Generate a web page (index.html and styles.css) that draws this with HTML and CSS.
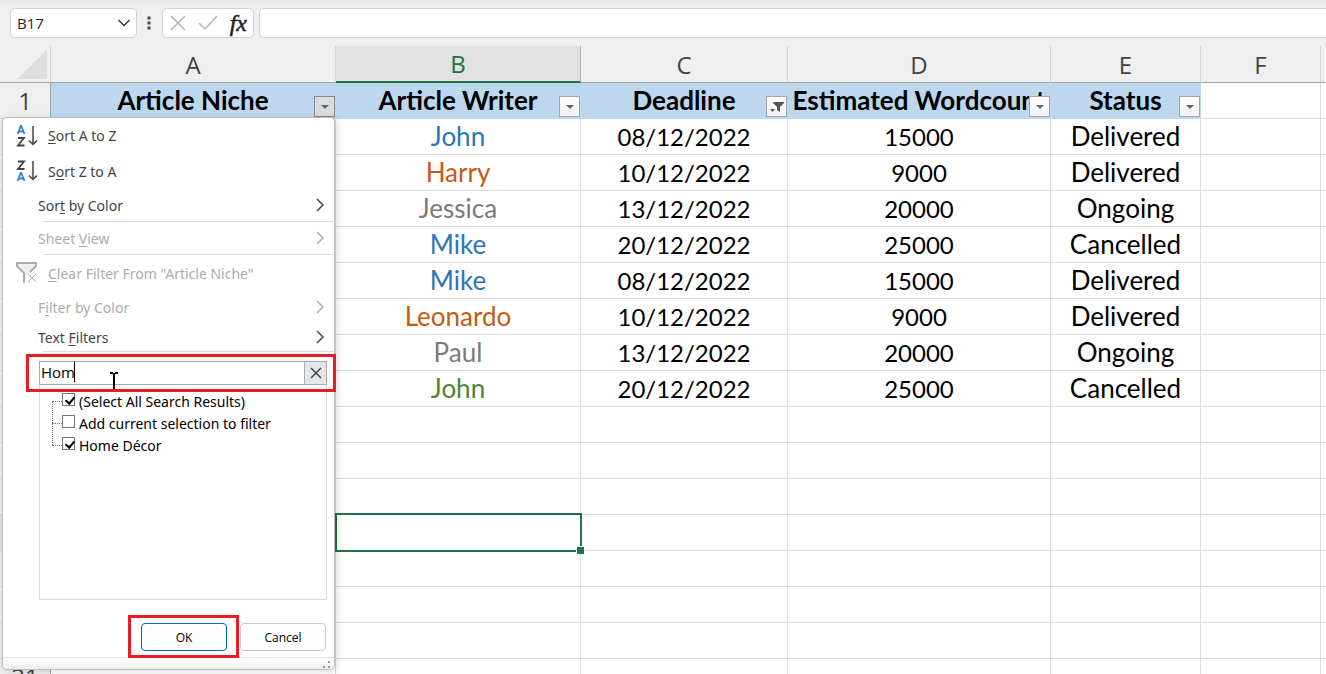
FILE: index.html
```html
<!DOCTYPE html>
<html lang="en">
<head>
    <meta charset="UTF-8">
    <meta name="viewport" content="width=device-width, initial-scale=1.0">
    <title>Article Tracker</title>
    <link rel="stylesheet" href="styles.css">
</head>
<body>
    <header class="formula-bar">
        <div class="name-box">
            <input type="text" class="name-input" value="B17" aria-label="Name box">
            <button type="button" class="icon-btn" aria-label="Show names">
                <svg width="14" height="8" viewBox="0 0 14 8"><path d="M1.5 1l5.500 5.500L12.500 1"/></svg>
            </button>
        </div>
        <svg class="dots" width="4" height="14" viewBox="0 0 4 14"><path d="M0.500 0.500h3v3h-3zM0.500 5.500h3v3h-3zM0.500 10.500h3v3h-3z"/></svg>
        <div class="formula-tools">
            <button type="button" class="icon-btn muted" aria-label="Cancel entry">
                <svg width="16" height="16" viewBox="0 0 16 16"><path d="M1 1l14 14M15 1L1 15"/></svg>
            </button>
            <button type="button" class="icon-btn muted" aria-label="Enter">
                <svg width="20" height="16" viewBox="0 0 20 16"><path d="M1 8l6 6L19 1"/></svg>
            </button>
            <button type="button" class="fx-btn" aria-label="Insert function"><i>fx</i></button>
        </div>
        <input type="text" class="formula-input" aria-label="Formula">
    </header>

    <main class="sheet">
        <table>
            <colgroup>
                <col class="col-head"><col class="col-a"><col class="col-b"><col class="col-c"><col class="col-d"><col class="col-e"><col class="col-f"><col>
            </colgroup>
            <thead>
                <tr>
                    <th class="corner"></th>
                    <th>A</th>
                    <th class="active">B</th>
                    <th>C</th>
                    <th>D</th>
                    <th>E</th>
                    <th>F</th>
                    <th></th>
                </tr>
            </thead>
            <tbody>
                <tr class="titles">
                    <th>1</th>
                    <td>Article Niche<button type="button" class="filter-btn open" aria-label="Filter Article Niche"><span class="arrow"></span></button></td>
                    <td>Article Writer<button type="button" class="filter-btn" aria-label="Filter Article Writer"><span class="arrow"></span></button></td>
                    <td>Deadline<button type="button" class="filter-btn" aria-label="Filter Deadline"><svg width="14" height="12" viewBox="0 0 14 12"><path d="M3 1h11v1L10 6v5L7 9V6L3 2zM0 8h5L2.500 11z"/></svg></button></td>
                    <td>Estimated Wordcount<button type="button" class="filter-btn" aria-label="Filter Estimated Wordcount"><span class="arrow"></span></button></td>
                    <td>Status<button type="button" class="filter-btn" aria-label="Filter Status"><span class="arrow"></span></button></td>
                    <td></td>
                    <td></td>
                </tr>
                <tr><th></th><td></td><td class="blue">John</td><td class="num">08/12/2022</td><td class="num">15000</td><td>Delivered</td><td></td><td></td></tr>
                <tr><th></th><td></td><td class="orange">Harry</td><td class="num">10/12/2022</td><td class="num">9000</td><td>Delivered</td><td></td><td></td></tr>
                <tr><th></th><td></td><td class="gray">Jessica</td><td class="num">13/12/2022</td><td class="num">20000</td><td>Ongoing</td><td></td><td></td></tr>
                <tr><th></th><td></td><td class="blue">Mike</td><td class="num">20/12/2022</td><td class="num">25000</td><td>Cancelled</td><td></td><td></td></tr>
                <tr><th></th><td></td><td class="blue">Mike</td><td class="num">08/12/2022</td><td class="num">15000</td><td>Delivered</td><td></td><td></td></tr>
                <tr><th></th><td></td><td class="orange">Leonardo</td><td class="num">10/12/2022</td><td class="num">9000</td><td>Delivered</td><td></td><td></td></tr>
                <tr><th></th><td></td><td class="gray">Paul</td><td class="num">13/12/2022</td><td class="num">20000</td><td>Ongoing</td><td></td><td></td></tr>
                <tr><th></th><td></td><td class="green">John</td><td class="num">20/12/2022</td><td class="num">25000</td><td>Cancelled</td><td></td><td></td></tr>
                <tr><th></th><td></td><td></td><td></td><td></td><td></td><td></td><td></td></tr>
                <tr><th></th><td></td><td></td><td></td><td></td><td></td><td></td><td></td></tr>
                <tr><th></th><td></td><td></td><td></td><td></td><td></td><td></td><td></td></tr>
                <tr><th class="active"></th><td></td><td class="selected"></td><td></td><td></td><td></td><td></td><td></td></tr>
                <tr><th></th><td></td><td></td><td></td><td></td><td></td><td></td><td></td></tr>
                <tr><th></th><td></td><td></td><td></td><td></td><td></td><td></td><td></td></tr>
                <tr><th></th><td></td><td></td><td></td><td></td><td></td><td></td><td></td></tr>
                <tr><th>21</th><td></td><td></td><td></td><td></td><td></td><td></td><td></td></tr>
            </tbody>
        </table>

        <form class="filter-menu">
            <button type="button" class="item tall">
                <svg class="sort" width="22" height="22" viewBox="0 0 22 22"><path class="letter-a" d="M1.500 9L4.800 1h.4l3.300 8M2.600 6.500h4.800"/><path d="M2 13h6L2 20.500h6.500"/><path class="stem" d="M17 1v18M13 15.500l4 4 4-4"/></svg>
                <span><u>S</u>ort A to Z</span>
            </button>
            <button type="button" class="item tall">
                <svg class="sort" width="22" height="22" viewBox="0 0 22 22"><path d="M2 1.500h6L2 9h6.500"/><path class="stem" d="M17 1v18M13 15.500l4 4 4-4"/><path class="letter-a" d="M1.500 21L4.800 13h.4l3.300 8M2.600 18.500h4.800"/></svg>
                <span>S<u>o</u>rt Z to A</span>
            </button>
            <button type="button" class="item sub"><span>Sor<u>t</u> by Color</span><svg class="chevron" width="8" height="14" viewBox="0 0 8 14"><path d="M1 1l6 6-6 6"/></svg></button>
            <hr>
            <button type="button" class="item sub" disabled><span>Sheet <u>V</u>iew</span><svg class="chevron" width="8" height="14" viewBox="0 0 8 14"><path d="M1 1l6 6-6 6"/></svg></button>
            <hr>
            <button type="button" class="item tall" disabled>
                <svg class="funnel" width="22" height="22" viewBox="0 0 22 22"><path class="cup" d="M14 10l6-6V1H1v3l7 7v10"/><path d="M12 12l8 8M20 12l-8 8"/></svg>
                <span><u>C</u>lear Filter From "Article Niche"</span>
            </button>
            <button type="button" class="item sub" disabled><span>F<u>i</u>lter by Color</span><svg class="chevron" width="8" height="14" viewBox="0 0 8 14"><path d="M1 1l6 6-6 6"/></svg></button>
            <button type="button" class="item sub short"><span>Text <u>F</u>ilters</span><svg class="chevron" width="8" height="14" viewBox="0 0 8 14"><path d="M1 1l6 6-6 6"/></svg></button>
            <hr>
            <div class="search">
                <input type="text" value="Hom" aria-label="Search">
                <button type="button" aria-label="Clear search"><svg width="12" height="12" viewBox="0 0 12 12"><path d="M1 1l10 10M11 1L1 11"/></svg></button>
                <span class="caret"></span>
                <svg class="pointer" width="8" height="17" viewBox="0 0 8 17"><path d="M0 1h3M5 1h3M4 1v16"/></svg>
                <span class="marker"></span>
            </div>
            <div class="results">
                <label><input type="checkbox" checked>(Select All Search Results)</label>
                <label><input type="checkbox">Add current selection to filter</label>
                <label><input type="checkbox" checked>Home Décor</label>
            </div>
            <div class="actions">
                <div class="ok-wrap"><button type="button" class="ok">OK</button><span class="marker"></span></div>
                <button type="button">Cancel</button>
            </div>
            <div class="grip"><svg width="8" height="8" viewBox="0 0 8 8"><path d="M5 0h2v2h-2zM0 5h2v2h-2zM5 5h2v2h-2z"/></svg></div>
        </form>
    </main>
</body>
</html>
```
FILE: styles.css
```css
* {
    margin: 0;
    padding: 0;
    box-sizing: border-box;
}

body {
    font-family: "Noto Sans", sans-serif;
    background: #efefef;
    color: #000;
    height: 100vh;
    display: flex;
    flex-direction: column;
    overflow: hidden;
}

button {
    font: inherit;
    color: inherit;
    background: none;
    border: none;
}

svg {
    display: block;
    fill: none;
    stroke: currentColor;
}

/* formula bar */
.formula-bar {
    display: flex;
    align-items: center;
    padding: 8px 0 8px 10px;
    background: linear-gradient(#e2e2e2, #efefef 6px);
}

.name-box,
.formula-tools,
.formula-input {
    height: 30px;
    background: #fff;
    border: 1px solid #d0d0d0;
    border-radius: 5px;
}

.name-box {
    width: 127px;
    display: flex;
    align-items: center;
    padding: 0 5px 0 6px;
}

.name-input {
    flex: 1;
    min-width: 0;
    border: none;
    outline: none;
    font: 15px "Open Sans", sans-serif;
    color: #262626;
}

.icon-btn {
    color: #333;
    stroke-width: 1.5;
}

.icon-btn.muted {
    color: #b3b3b3;
}

.dots {
    margin: 0 11px 0 10px;
    fill: #444;
    stroke: none;
}

.formula-tools {
    width: 92px;
    margin-right: 5px;
    padding: 0 6px 0 7px;
    display: flex;
    align-items: center;
    justify-content: space-between;
}

.fx-btn {
    font: 24px/26px "Liberation Serif", serif;
    color: #222;
    -webkit-text-stroke: 0.5px #222;
}

.formula-input {
    flex: 1;
    min-width: 0;
    border-right: none;
    border-radius: 5px 0 0 5px;
    padding: 0 8px;
}

/* grid */
.sheet {
    flex: 1;
    position: relative;
}

table {
    width: 100%;
    table-layout: fixed;
    border-collapse: separate;
    border-spacing: 0;
    font: 26px/33px Lato, sans-serif;
    text-align: center;
}

.col-head { width: 51px; }
.col-a { width: 285px; }
.col-b { width: 245px; }
.col-c { width: 207px; }
.col-d { width: 263px; }
.col-e { width: 150px; }
.col-f { width: 120px; }

td {
    position: relative;
    height: 36px;
    background: #fff;
    border-right: 1px solid #dcdcdc;
    border-bottom: 1px solid #dcdcdc;
    white-space: nowrap;
}

th {
    height: 36px;
    color: #444;
    font: 24px/34px "Open Sans", sans-serif;
    border-right: 1px solid #a6a6a6;
    border-bottom: 1px solid #d4d4d4;
}

thead th {
    height: 37px;
    padding-top: 1px;
    border-bottom: 1px solid #a6a6a6;
    border-right-color: #d4d4d4;
}

thead .active {
    background: #e1e1e1;
    color: #217346;
    border-bottom: 2px solid #217346;
    border-right-color: #b0b0b0;
}

tbody .active {
    background: #e1e1e1;
}

td:last-child,
th:last-child {
    border-right: none;
}

.corner {
    background: linear-gradient(135deg, transparent 50%, #dedede 50%) 18px 4px / 29px 29px no-repeat;
}

.num {
    font-size: 24px;
}

.titles td {
    font-weight: bold;
}

.titles td:nth-child(-n+6) {
    background: #bdd7ee;
    border-color: #bdd7ee;
}

.filter-btn {
    position: absolute;
    right: 0;
    bottom: 1px;
    width: 21px;
    height: 21px;
    display: flex;
    align-items: center;
    justify-content: center;
    background: linear-gradient(#fff, #f0f2f6);
    border: 1px solid #a0a4ab;
}

.filter-btn.open {
    background: #d9dce1;
    border-color: #888;
}

.filter-btn svg {
    fill: #555;
    stroke: none;
}

.arrow {
    border: 4px solid transparent;
    border-top-color: #666;
    border-bottom: none;
}

.blue { color: #2e75b6; }
.orange { color: #c55a11; }
.gray { color: #7b7b7b; }
.green { color: #548235; }

.selected {
    z-index: 1;
}

.selected::before {
    content: "";
    position: absolute;
    inset: -2px -2px -2px -1px;
    border: 2px solid #217346;
}

.selected::after {
    content: "";
    position: absolute;
    right: -4px;
    bottom: -4px;
    width: 7px;
    height: 7px;
    background: #217346;
    border: 1px solid #fff;
    border-right: none;
    border-bottom: none;
}

/* filter drop-down */
.filter-menu {
    position: absolute;
    z-index: 2;
    top: 71px;
    left: 2px;
    width: 333px;
    display: flex;
    flex-direction: column;
    background: #fff;
    border: 1px solid #bdbdbd;
    border-radius: 5px;
    box-shadow: 2px 2px 8px rgba(0, 0, 0, 0.15);
    font-size: 14px;
    color: #444;
}

.item {
    height: 32px;
    display: flex;
    align-items: center;
    text-align: left;
}

.item.tall {
    height: 36px;
    gap: 10px;
    padding-left: 13px;
}

.item.tall:first-child {
    height: 35px;
}

.item.sub {
    justify-content: space-between;
    padding: 0 10px 0 35px;
}

.item.short {
    height: 28px;
}

.item:disabled {
    color: #ababab;
}

.item u {
    text-underline-offset: 2px;
}

.sort {
    stroke-width: 1.8;
}

.stem {
    stroke-width: 1.5;
}

.letter-a {
    stroke: #2b88d0;
}

.cup {
    stroke-width: 2;
    fill: #efefef;
}

.chevron {
    stroke-width: 1.5;
}

hr {
    border: none;
    height: 1px;
    margin-left: 40px;
    background: #dcdcdc;
}

.search {
    position: relative;
    display: flex;
    height: 24px;
    margin: 9px 7px 0 36px;
    border: 1px solid #ababab;
}

.search input {
    flex: 1;
    min-width: 0;
    padding: 0 0 2px 1px;
    border: none;
    outline: none;
    font: 15px "Open Sans", sans-serif;
    color: #000;
}

.search button {
    width: 22px;
    display: flex;
    align-items: center;
    justify-content: center;
    background: #e3e6eb;
    border-left: 1px solid #ababab;
    stroke-width: 1.5;
}

.marker {
    position: absolute;
    border: 3px solid #ed1c24;
    pointer-events: none;
}

.search .marker {
    inset: -8px -10px -8px -14px;
}

.caret {
    position: absolute;
    top: 0;
    left: 34px;
    width: 1px;
    height: 20px;
    background: #000;
}

.pointer {
    position: absolute;
    top: 10px;
    left: 70px;
    color: #000;
    stroke-width: 2;
}

.results {
    height: 215px;
    margin: 0 7px 0 36px;
    padding: 5px 0 0 12px;
    border: 1px solid #dcdcdc;
    border-top: none;
    color: #000;
}

.results label {
    position: relative;
    display: flex;
    align-items: center;
    height: 22px;
    gap: 4px;
}

.results label::before {
    content: "";
    width: 10px;
    margin-right: -4px;
    border-top: 1px dotted #777;
}

.results label:not(:last-child)::after {
    content: "";
    position: absolute;
    top: 11px;
    left: 0;
    height: 22px;
    border-left: 1px dotted #777;
}

.results input {
    appearance: none;
    width: 13px;
    height: 13px;
    margin-bottom: 3px;
    border: 1px solid #777;
}

.results input:checked::before {
    content: "";
    display: block;
    width: 4px;
    height: 7px;
    margin: 1px 0 0 4px;
    border: solid #000;
    border-width: 0 2px 2px 0;
    transform: rotate(40deg);
}

.actions {
    display: flex;
    justify-content: flex-end;
    gap: 13px;
    padding: 23px 8px 6px 0;
    font: 12px "Open Sans", sans-serif;
    color: #000;
}

.ok-wrap {
    position: relative;
}

.actions button {
    width: 86px;
    height: 28px;
    background: #fdfdfd;
    border: 1px solid #c8c8c8;
    border-radius: 4px;
}

.actions .ok {
    border-color: #0067c0;
}

.ok-wrap .marker {
    inset: -8px -12px -7px -13px;
}

.grip {
    display: flex;
    justify-content: flex-end;
    height: 12px;
    padding: 3px 3px 0 0;
    border-top: 1px solid #dce3e8;
    background: linear-gradient(#fff, #eee);
    border-radius: 0 0 5px 5px;
}

.grip svg {
    fill: #999;
    stroke: none;
}
```
